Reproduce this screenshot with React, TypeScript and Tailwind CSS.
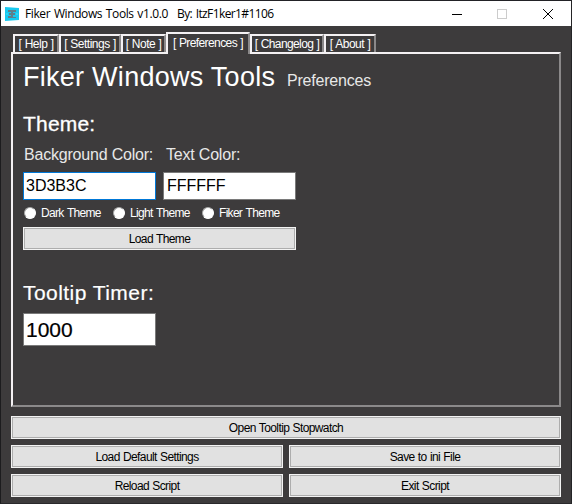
import type { ReactNode } from "react";

const tabs = [
  { label: "[ Help ]", size: "w-[46px]", text: "tracking-[-0.5px]" },
  { label: "[ Settings ]", size: "w-[62px]", text: "tracking-[-0.5px]" },
  { label: "[ Note ]", size: "w-[45px]", text: "tracking-[-0.5px]" },
  { label: "[ Preferences ]", size: "w-[84px]", text: "tracking-[-0.6px]", active: true },
  { label: "[ Changelog ]", size: "w-[74px]", text: "tracking-[-0.6px]" },
  { label: "[ About ]", size: "w-[52px]", text: "tracking-[-0.5px]" },
];

function PushButton({ children, className = "" }: { children: ReactNode; className?: string }) {
  return (
    <button className={`h-[23px] border border-[#f3f3f3] bg-[#e1e1e1] text-[12px] leading-[19px] tracking-[-0.6px] [word-spacing:0.5px] text-black ${className}`}>
      <span className="block h-[21px] border border-[#adadad] pt-px">{children}</span>
    </button>
  );
}

function Radio({ label, className }: { label: string; className: string }) {
  return (
    <label className={`flex items-center gap-[5px] ${className}`}>
      <span className="size-3 shrink-0 rounded-full border border-[#a5a5a5] border-r-white border-b-white bg-white" />
      <span className="text-[12px] leading-[14px] tracking-[-0.7px] [word-spacing:1px] whitespace-nowrap">{label}</span>
    </label>
  );
}

export default function App() {
  return (
    <div className="flex h-[504px] w-[572px] flex-col overflow-hidden border border-t-[#222226] border-r-[#242426] border-b-[#29292b] border-l-[#1c1c1e] bg-[#3d3b3c] font-['Liberation_Sans',sans-serif] text-white">
      <header className="flex h-[25px] shrink-0 items-center bg-white text-black">
        <svg className="ml-1 shrink-0" width="14" height="14" viewBox="0 0 14 14">
          <path d="M0 0L14 1V13L0 14Z" fill="#18c9ef" />
          <path d="M3 3h8v2H8v1h2v2H8v2h3v1H3V9h3V8H4V6h2V5H3z" fill="#607f8b" />
          <path d="M1 7h2M11 7h2" stroke="#4dddf5" />
        </svg>
        <span className="ml-[6px] w-[152px] font-['Open_Sans',sans-serif] text-[12px] leading-[16px] tracking-[-0.4px] [word-spacing:1px] whitespace-nowrap">Fiker Windows Tools v1.0.0</span>
        <span className="font-['Open_Sans',sans-serif] text-[12px] leading-[16px] tracking-[-0.6px] [word-spacing:1px] whitespace-nowrap">By: ItzF1ker1#1106</span>
        <svg className="ml-auto mr-[17px]" width="103" height="12" viewBox="0 0 103 12" fill="none" shapeRendering="crispEdges">
          <path d="M1 6.5h10" stroke="black" />
          <path d="M46.5 1.5h9v9h-9z" stroke="#ccc" />
          <path d="M92 1l10 10M102 1L92 11" stroke="black" shapeRendering="auto" />
        </svg>
      </header>

      <nav className="ml-3 flex h-[26px] shrink-0 items-end">
        {tabs.map((tab) => (
          <div
            key={tab.label}
            className={`${tab.size} shrink-0 border-t-2 border-r-2 border-l-2 border-t-[#f4f1f3] border-r-[#8b898a] border-l-[#f4f1f3] bg-[#3d3b3c] text-center text-[12px] [word-spacing:0.5px] whitespace-nowrap ${tab.text} ${tab.active ? "relative z-10 -mb-[2px] h-[22px] leading-[18px]" : "h-[18px] leading-[17px]"}`}
          >
            {tab.label}
          </div>
        ))}
      </nav>

      <main className="ml-[10px] h-[355px] w-[550px] shrink-0 border-2 border-t-[#f4f1f3] border-r-[#8b898a] border-b-[#8b898a] border-l-[#f4f1f3] pl-[10px]">
        <div className="flex h-[58px] items-baseline pt-[7px] whitespace-nowrap">
          <h1 className="w-[264px] text-[27px] leading-[32px] tracking-[0.27px]">Fiker Windows Tools</h1>
          <span className="text-[16px] tracking-[-0.2px] text-[#e8e8e8]">Preferences</span>
        </div>
        <h2 className="h-[33px] text-[21px] leading-[24px] tracking-[0.2px] [-webkit-text-stroke:0.3px_white]">Theme:</h2>
        <div className="flex h-[27px] pl-px text-[16px] leading-[20px] text-[#e8e8e8]">
          <span className="w-[142px] tracking-[-0.2px]">Background Color:</span>
          <span className="tracking-[-0.2px]">Text Color:</span>
        </div>
        <div className="flex gap-[7px] text-[16px] leading-[25px] text-black">
          <div className="h-[28px] w-[133px] border border-[#0078d7] bg-white pl-[2px]">3D3B3C</div>
          <div className="h-[28px] w-[133px] border border-[#7a7a7a] bg-white pl-[3px]">FFFFFF</div>
        </div>
        <div className="mt-[6px] flex h-[14px] pl-px">
          <Radio label="Dark Theme" className="w-[89px]" />
          <Radio label="Light Theme" className="w-[89px]" />
          <Radio label="Fiker Theme" className="w-[89px]" />
        </div>
        <PushButton className="mt-[7px] block w-[273px]">Load Theme</PushButton>
        <h2 className="mt-[31px] text-[21px] leading-[24px] tracking-[0.45px] [-webkit-text-stroke:0.2px_white]">Tooltip Timer:</h2>
        <div className="mt-[8px] h-[33px] w-[133px] border border-[#7a7a7a] bg-white pl-[2px] text-[21px] leading-[31px] text-black [-webkit-text-stroke:0.2px_black]">1000</div>
      </main>

      <footer className="mt-[9px] ml-[10px] grid w-[550px] grid-cols-2 gap-x-[6px] gap-y-[6px]">
        <PushButton className="col-span-2">Open Tooltip Stopwatch</PushButton>
        <PushButton>Load Default Settings</PushButton>
        <PushButton>Save to ini File</PushButton>
        <PushButton>Reload Script</PushButton>
        <PushButton>Exit Script</PushButton>
      </footer>
    </div>
  );
}
